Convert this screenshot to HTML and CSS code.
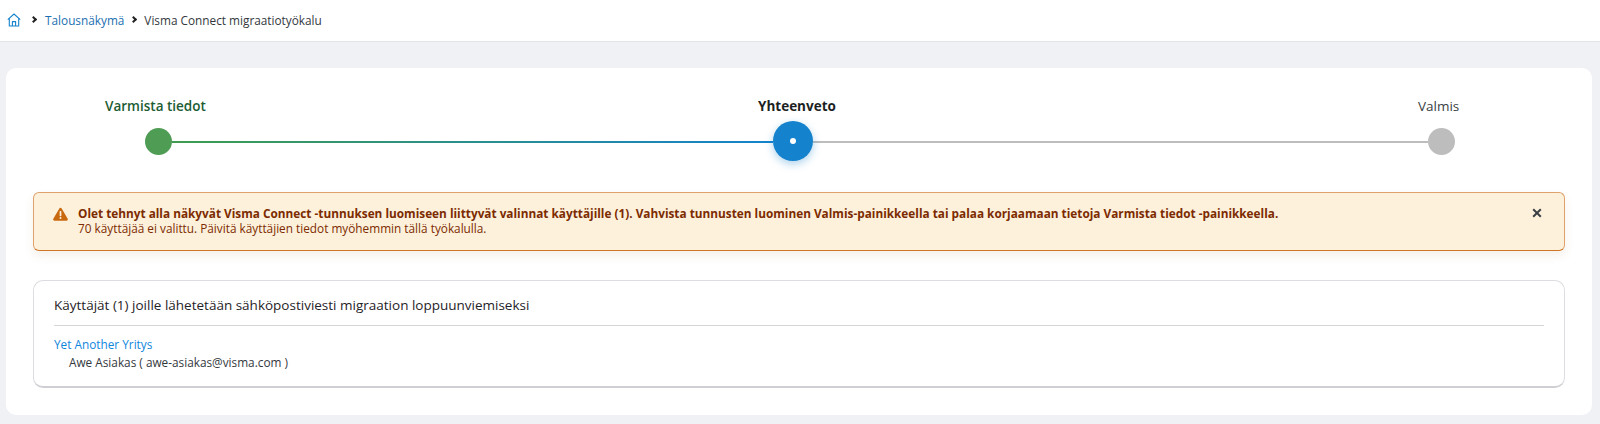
FILE: index.html
```html
<!DOCTYPE html>
<html lang="fi">
<head>
    <meta charset="UTF-8">
    <title>Visma Connect migraatiotyökalu</title>
    <link rel="stylesheet" href="styles.css">
</head>
<body>
    <nav class="breadcrumbs">
        <svg class="home-icon" viewBox="0 0 14 14" width="14" height="14" fill="none" stroke="#1482cc" stroke-width="1.1" stroke-linejoin="round">
            <path d="M.8 6.6 7 1l6.2 5.6"/>
            <path d="M2.3 5.6V13h9.4V5.6"/>
            <path d="M5.4 13V8.6h3.2V13"/>
        </svg>
        <span class="crumb-sep"></span>
        <a class="crumb-link">Talousnäkymä</a>
        <span class="crumb-sep"></span>
        <span class="crumb-current">Visma Connect migraatiotyökalu</span>
    </nav>

    <main class="page-card">
        <section class="stepper">
            <div class="step-labels">
                <span class="step-label done">Varmista tiedot</span>
                <span class="step-label active">Yhteenveto</span>
                <span class="step-label">Valmis</span>
            </div>
            <div class="step-track">
                <span class="dot dot-done"></span>
                <span class="line line-done"></span>
                <span class="dot dot-active"></span>
                <span class="line line-todo"></span>
                <span class="dot dot-todo"></span>
            </div>
        </section>

        <section class="alert">
            <svg class="alert-icon" viewBox="0 0 14 13" width="15" height="14">
                <path d="M7 .6c.5 0 .9.3 1.1.7l5.6 9.6c.5.8-.1 1.8-1.1 1.8H1.400c-1 0-1.600-1-1.100-1.800L5.900 1.300C6.100.9 6.500.6 7 .6Z" fill="#c9690f"/>
                <rect x="6.200" y="3.800" width="1.600" height="4.700" rx=".5" fill="#fdf1dc"/>
                <circle cx="7" cy="10.300" r=".95" fill="#fdf1dc"/>
            </svg>
            <div class="alert-text">
                <strong>Olet tehnyt alla näkyvät Visma Connect -tunnuksen luomiseen liittyvät valinnat käyttäjille (1). Vahvista tunnusten luominen Valmis-painikkeella tai palaa korjaamaan tietoja Varmista tiedot -painikkeella.</strong>
                <p>70 käyttäjää ei valittu. Päivitä käyttäjien tiedot myöhemmin tällä työkalulla.</p>
            </div>
            <svg class="alert-close" viewBox="0 0 10 10" width="10" height="10" stroke="#3a3f44" stroke-width="2">
                <path d="M1.200 1.200l7.600 7.600M8.800 1.200 1.200 8.800"/>
            </svg>
        </section>

        <section class="users-panel">
            <h3>Käyttäjät (1) joille lähetetään sähköpostiviesti migraation loppuunviemiseksi</h3>
            <a class="company">Yet Another Yritys</a>
            <p class="user">Awe Asiakas ( awe-asiakas@visma.com )</p>
        </section>
    </main>
</body>
</html>
```

FILE: styles.css
```css
* {
    box-sizing: border-box;
    margin: 0;
    padding: 0;
}
body {
    font-family: "Open Sans", "Noto Sans", sans-serif;
    font-size: 11.800px;
    background-color: #eff1f5;
    color: #33383d;
    height: 424px;
    overflow: hidden;
}
.breadcrumbs {
    display: flex;
    align-items: center;
    height: 42px;
    padding: 0 0 2px 7px;
    background-color: white;
    border-bottom: 1px solid #e3e5e9;
}
.crumb-sep {
    width: 5px;
    height: 5px;
    margin: 0 8px 0 7px;
    border-top: 2px solid #222;
    border-right: 2px solid #222;
    transform: rotate(45deg);
}
.home-icon + .crumb-sep {
    margin: 0 9px 0 10px;
}
.crumb-link {
    color: #1a6fb0;
}
.page-card {
    margin: 26px 8px 0 6px;
    height: 347px;
    padding: 25px 27px 0;
    background-color: white;
    border-radius: 10px;
}
.stepper {
    height: 99px;
}
.step-labels {
    display: grid;
    grid-template-columns: 653px 660px auto;
    padding-left: 72px;
    padding-top: 1px;
    font-size: 13.500px;
    line-height: 24px;
    color: #3a3f44;
}
.step-label.done {
    color: #1d5c33;
    font-weight: 600;
}
.step-label.active {
    color: #1c1f22;
    font-weight: 700;
}
.step-track {
    display: flex;
    align-items: center;
    height: 40px;
    padding-left: 112px;
    margin-top: 3px;
}
.dot {
    flex: none;
    border-radius: 50%;
}
.dot-done {
    width: 27px;
    height: 27px;
    background-color: #4f9c55;
}
.dot-active {
    position: relative;
    width: 40px;
    height: 40px;
    background-color: #1482cc;
    box-shadow: 0 3px 8px rgba(20, 130, 204, 0.35);
}
.dot-active::after {
    content: "";
    position: absolute;
    top: 17px;
    left: 17px;
    width: 6px;
    height: 6px;
    border-radius: 50%;
    background-color: white;
}
.dot-todo {
    width: 27px;
    height: 27px;
    background-color: #bdbdbd;
}
.line {
    height: 2px;
    margin-top: 2px;
}
.line-done {
    width: 601px;
    background: linear-gradient(to right, #3f9c4e, #1482cc);
}
.line-todo {
    width: 615px;
    background-color: #bdbdbd;
}
.alert {
    display: flex;
    align-items: flex-start;
    height: 59px;
    padding: 13px 22px 0 19px;
    background-color: #fdf1dc;
    border: 1px solid #dfa26d;
    border-bottom-color: #cf7624;
    border-radius: 6px;
    box-shadow: 0 5px 10px rgba(160, 110, 50, 0.1);
    color: #7c2b00;
    line-height: 15px;
}
.alert-icon {
    flex: none;
    margin: 1px 10px 0 0;
}
.alert-text {
    flex: 1;
}
.alert-text strong {
    display: block;
    font-weight: 700;
}
.alert-close {
    flex: none;
    margin-top: 2px;
}
.users-panel {
    height: 108px;
    margin-top: 29px;
    padding: 15px 20px 0;
    background-color: white;
    border: 1px solid #dcdde0;
    border-bottom: 2px solid #cfd0d3;
    border-radius: 10px;
}
.users-panel h3 {
    height: 30px;
    margin-bottom: 9px;
    font-size: 13.500px;
    font-weight: 400;
    line-height: 18px;
    color: #1f2327;
    border-bottom: 1px solid #d5d6d8;
}
.company {
    display: block;
    color: #0f86dc;
    line-height: 18px;
}
.user {
    padding-left: 15px;
    line-height: 19px;
}
```
